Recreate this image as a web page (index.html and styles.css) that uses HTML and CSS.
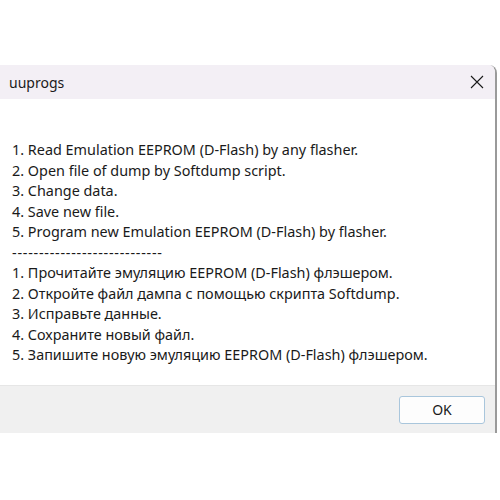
FILE: index.html
```html
<!DOCTYPE html>
<html>
<head>
  <meta charset="utf-8">
  <title>uuprogs</title>
  <link rel="stylesheet" href="styles.css">
</head>
<body>
  <div class="dialog">
    <div class="titlebar">
      <span class="title">uuprogs</span>
      <span class="close">
        <svg width="14" height="14" viewBox="0 0 14 14">
          <path d="M1 1 L13 13 M13 1 L1 13" stroke="#1a1a1a" stroke-width="1.1" fill="none"/>
        </svg>
      </span>
    </div>

    <div class="message">
      <div>1. Read Emulation EEPROM (D-Flash) by any flasher.</div>
      <div>2. Open file of dump by Softdump script.</div>
      <div>3. Change data.</div>
      <div>4. Save new file.</div>
      <div>5. Program new Emulation EEPROM (D-Flash) by flasher.</div>
      <div class="divider">----------------------------</div>
      <div>1. Прочитайте эмуляцию EEPROM (D-Flash) флэшером.</div>
      <div>2. Откройте файл дампа с помощью скрипта Softdump.</div>
      <div>3. Исправьте данные.</div>
      <div>4. Сохраните новый файл.</div>
      <div>5. Запишите новую эмуляцию EEPROM (D-Flash) флэшером.</div>
    </div>

    <div class="footer">
      <button class="ok-button">OK</button>
    </div>
  </div>
</body>
</html>
```

FILE: styles.css
```css
body {
  margin: 0;
  padding: 0;
  background-color: #fff;
  font-family: "Noto Sans", "Open Sans", sans-serif;
  color: #1a1a1a;
}

.dialog {
  margin-top: 65px;
  width: 495px;
  border-right: 2px solid #9a9a9a;
  border-top-right-radius: 8px;
  overflow: hidden;
}

.titlebar {
  height: 34px;
  background-color: #f3eff5;
  display: flex;
  align-items: center;
  justify-content: space-between;
  padding: 0 11px 0 9px;
}

.title {
  font-size: 14px;
}

.close {
  display: flex;
  align-items: center;
}

.message {
  height: 245px;
  padding: 41px 0 0 12px;
  background-color: #fff;
  font-size: 14.4px;
  line-height: 20.5px;
}

.divider {
  letter-spacing: 0.75px;
}

.footer {
  height: 47px;
  border-top: 1px solid #e6e6e6;
  background-color: #f0f0f0;
  display: flex;
  align-items: center;
  justify-content: flex-end;
  padding-right: 10px;
}

.ok-button {
  width: 86px;
  height: 28px;
  background-color: #fdfdfd;
  border: 1px solid #a9c6dc;
  border-radius: 3px;
  font-family: "Noto Sans", "Open Sans", sans-serif;
  font-size: 14px;
  color: #1a1a1a;
}
```
